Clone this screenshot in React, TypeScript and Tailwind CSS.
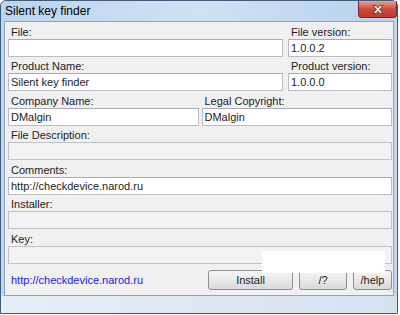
import React from "react";

const font = "font-['Liberation_Sans',Arial,sans-serif]";

const Label = ({ text }: { text: string }) => (
  <div className="h-[14px] pl-[3px] text-[11px] leading-[14px] text-[#1c1c1c] whitespace-nowrap">
    {text}
  </div>
);

const Field = ({ value, disabled }: { value?: string; disabled?: boolean }) => (
  <div
    className={
      disabled
        ? "h-[18px] border border-[#bfc3c8] bg-[#f2f2f2]"
        : "h-[18px] border border-[#b9bdc3] border-t-[#a9adb3] bg-white px-[2px] text-[11px] leading-[16px] text-[#1c1c1c] whitespace-nowrap overflow-hidden"
    }
  >
    {value}
  </div>
);

const Button = ({ label, w }: { label: string; w: string }) => (
  <div
    className={`${w} h-[20px] rounded-[3px] border border-[#8e8f8f] bg-linear-to-b from-[#f5f5f5] via-[#e9e9e9] to-[#d8d8d8] flex items-center justify-center text-[11px] text-[#1c1c1c]`}
  >
    {label}
  </div>
);

const CloseButton = () => (
  <div className="absolute top-0 right-0 w-[39px] h-[17px] rounded-b-[4px] border border-t-0 border-[#6b2b24] bg-linear-to-b from-[#e6a296] via-[#cc4b3c] to-[#c2392a] flex items-center justify-center">
    <svg width="12" height="9" viewBox="0 0 12 9">
      <path
        d="M1 0.5 L4 0.5 L6 2.8 L8 0.5 L11 0.5 L7.6 4.5 L11 8.5 L8 8.5 L6 6.2 L4 8.5 L1 8.5 L4.4 4.5 Z"
        fill="#f4f4f4"
        stroke="#5a2620"
        strokeWidth="0.8"
      />
    </svg>
  </div>
);

const App = () => {
  return (
    <div className={`${font} w-[400px] h-[315px] bg-white relative overflow-hidden`}>
      <div className="relative w-[398px] h-[314px] border border-[#3f5d7c] rounded-t-[6px] bg-[#c2d7ee] flex flex-col">
        <div className="h-[20px] flex items-center pl-[4px] bg-linear-to-r from-[#bcd4ee] via-[#cfe1f4] to-[#b8d0eb] rounded-t-[6px]">
          <span className="text-[12px] leading-none text-black">Silent key finder</span>
        </div>
        <CloseButton />

        <div className="h-[275px] mx-[3px] border border-[#8ea4bd] bg-[#f0f0f0] flex flex-col pt-[3px] pl-[3px] pr-[1px]">
          <div className="grid grid-cols-[1fr_104px] gap-x-[5px]">
            <div>
              <Label text="File:" />
              <Field />
            </div>
            <div>
              <Label text="File version:" />
              <Field value="1.0.0.2" />
            </div>
          </div>

          <div className="grid grid-cols-[1fr_104px] gap-x-[5px] mt-[2px]">
            <div>
              <Label text="Product Name:" />
              <Field value="Silent key finder" />
            </div>
            <div>
              <Label text="Product version:" />
              <Field value="1.0.0.0" />
            </div>
          </div>

          <div className="grid grid-cols-2 gap-x-[3px] mt-[3px]">
            <div>
              <Label text="Company Name:" />
              <Field value="DMalgin" />
            </div>
            <div>
              <Label text="Legal Copyright:" />
              <Field value="DMalgin" />
            </div>
          </div>

          <div className="mt-[2px]">
            <Label text="File Description:" />
            <Field disabled />
          </div>

          <div className="mt-[3px]">
            <Label text="Comments:" />
            <Field value="http://checkdevice.narod.ru" />
          </div>

          <div className="mt-[2px]">
            <Label text="Installer:" />
            <Field disabled />
          </div>

          <div className="mt-[3px]">
            <Label text="Key:" />
            <Field disabled />
          </div>

          <div className="mt-[6px] h-[20px] flex items-center">
            <span className="pl-[3px] text-[11px] leading-[14px] text-[#1a1ae6]">
              http://checkdevice.narod.ru
            </span>
            <div className="ml-auto flex gap-x-[6px]">
              <Button label="Install" w="w-[85px]" />
              <Button label="/?" w="w-[48px]" />
              <Button label="/help" w="w-[39px]" />
            </div>
          </div>
        </div>

        <div className="flex-1 bg-linear-to-r from-[#e6eef7] via-[#dde8f3] to-[#d4e2f0]" />
      </div>

      <div className="absolute left-[262px] top-[251px] w-[123px] h-[22px] bg-white" />
    </div>
  );
};

export default App;
